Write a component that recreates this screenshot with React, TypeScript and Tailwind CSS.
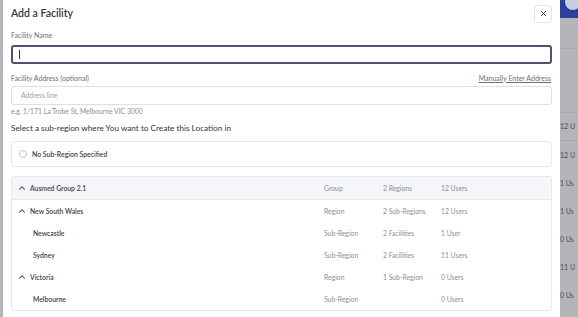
import { ChevronUp, X } from "lucide-react";

type Row = { name: string; type: string; count: string; users: string; level: 0 | 1; head?: boolean };

const rows: Row[] = [
  { name: "Ausmed Group 2.1", type: "Group", count: "2 Regions", users: "12 Users", level: 0, head: true },
  { name: "New South Wales", type: "Region", count: "2 Sub-Regions", users: "12 Users", level: 0 },
  { name: "Newcastle", type: "Sub-Region", count: "2 Facilities", users: "1 User", level: 1 },
  { name: "Sydney", type: "Sub-Region", count: "2 Facilities", users: "11 Users", level: 1 },
  { name: "Victoria", type: "Region", count: "1 Sub-Region", users: "0 Users", level: 0 },
  { name: "Melbourne", type: "Sub-Region", count: "", users: "0 Users", level: 1 },
];

const sideUsers = ["12 U", "12 U", "1 Us", "1 Us", "0 Us", "11 U", "0 Us"];

export default function App() {
  return (
    <div className="flex h-[317px] w-[578px] overflow-hidden bg-[#b4b5b9] font-['Lato',sans-serif]">
      {/* left sliver of the page behind */}
      <div className="w-[3px] shrink-0 bg-[#b4b5b9]" />

      {/* modal */}
      <div className="flex w-[557px] shrink-0 flex-col bg-white px-[8px]">
        <header className="flex h-[27px] items-center justify-between">
          <h1 className="text-[10.5px] font-semibold text-[#2f3340]">Add a Facility</h1>
          <button className="flex h-[18px] w-[18px] items-center justify-center rounded-[3px] border border-[#e2e4e8] text-[#333]">
            <X size={9} strokeWidth={2.5} />
          </button>
        </header>

        <label className="mt-[3px] text-[7px] text-[#6b6f78]">Facility Name</label>
        <div className="mt-[4px] flex h-[19px] items-center rounded-[3px] border-2 border-[#4c5470] px-[6px]">
          <span className="h-[9px] w-px bg-[#333]" />
        </div>

        <div className="mt-[9px] flex items-baseline justify-between">
          <label className="text-[7px] text-[#6b6f78]">Facility Address (optional)</label>
          <a className="mr-px text-[7px] text-[#6b6f78] underline">Manually Enter Address</a>
        </div>
        <div className="mt-[3px] flex h-[19px] items-center rounded-[3px] border border-[#dcdfe4] px-[9px] text-[6.8px] text-[#9a9ea6]">
          Address line
        </div>
        <p className="mt-px text-[6.8px] text-[#8a8e96]">e.g. 1/171 La Trobe St, Melbourne VIC 3000</p>

        <p className="mt-[6px] text-[8.2px] text-[#2f3340]">Select a sub-region where You want to Create this Location in</p>

        <div className="mt-[7px] flex h-[26px] items-center gap-[5px] rounded-[3px] border border-[#e6e8ec] px-[7px]">
          <span className="h-[8px] w-[8px] rounded-full border border-[#bfc3ca]" />
          <span className="text-[6.9px] font-semibold text-[#3a3e48]">No Sub-Region Specified</span>
        </div>

        <div className="mt-[9px] rounded-[3px] border border-[#e6e8ec]">
          {rows.map((r) => (
            <div
              key={r.name}
              className={`flex items-center text-[6.8px] ${r.head ? "h-[23px] border-b border-[#e6e8ec] bg-[#f5f6f8]" : "h-[22px]"}`}
            >
              <div className={`flex w-[312px] items-center gap-[3px] ${r.level ? "pl-[21px]" : "pl-[5px]"}`}>
                {r.level === 0 && <ChevronUp size={10} strokeWidth={2.5} className="text-[#333]" />}
                <span className="font-semibold text-[#3a3e48]">{r.name}</span>
              </div>
              <span className="w-[59px] text-[#8a8e96]">{r.type}</span>
              <span className="w-[58px] text-[#8a8e96]">{r.count}</span>
              <span className="text-[#8a8e96]">{r.users}</span>
            </div>
          ))}
        </div>
      </div>

      {/* dimmed page to the right */}
      <div className="flex flex-1 flex-col">
        <div className="flex h-[18px] items-start bg-[#2c3f9c] pl-[5px]">
          <span className="mt-[-6px] h-[16px] w-[16px] rounded-full bg-[#c9cde0]" />
        </div>
        <div className="h-[31px] border-b border-[#a9aaae]" />
        <div className="h-[64px] border-b border-[#a9aaae]" />
        <div className="flex flex-col">
          {sideUsers.map((u, i) => (
            <div
              key={i}
              className={`flex h-[28px] items-center whitespace-nowrap text-[7px] text-[#4a4c52] ${i === 0 ? "border-b border-[#a9aaae]" : ""}`}
            >
              {u}
            </div>
          ))}
        </div>
      </div>
    </div>
  );
}
